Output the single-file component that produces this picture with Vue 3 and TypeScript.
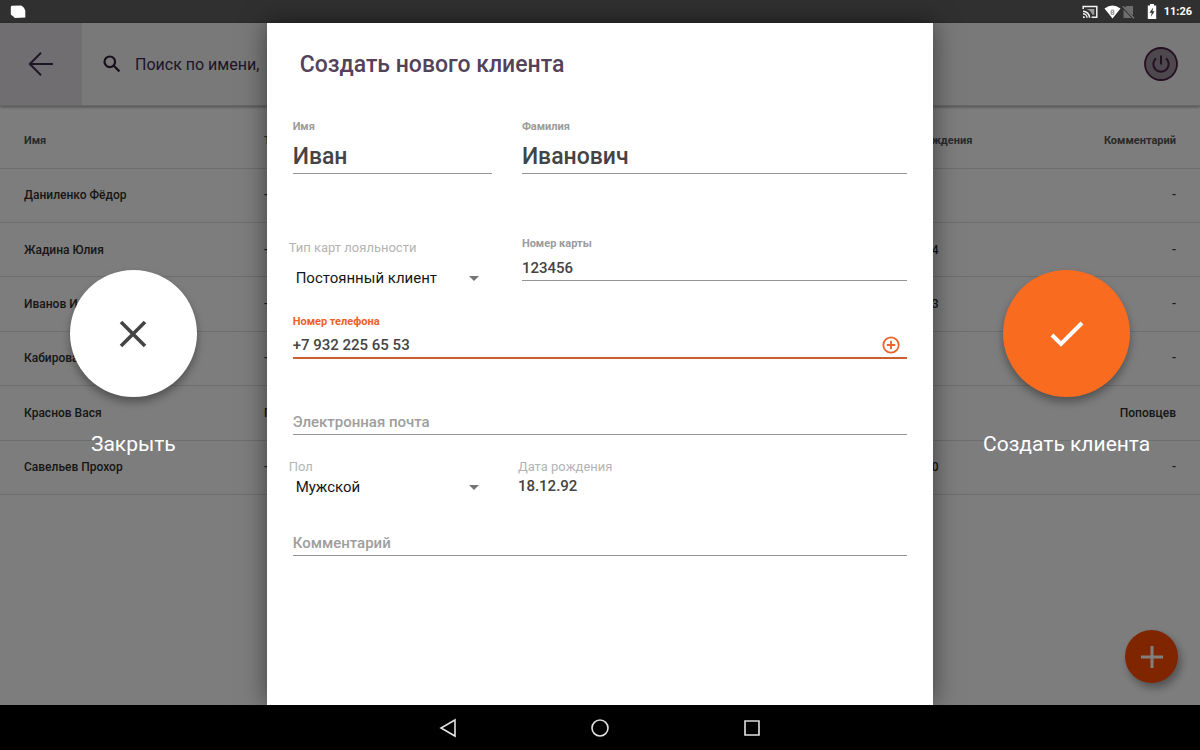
<script setup lang="ts">
import { reactive, ref } from 'vue'

interface Client {
  name: string
  card: string
  birth: string
  comment: string
}

const clients: Client[] = [
  { name: 'Даниленко Фёдор', card: '-', birth: '-', comment: '-' },
  { name: 'Жадина Юлия', card: '-', birth: '12.03.84', comment: '-' },
  { name: 'Иванов Илья', card: '-', birth: '05.07.93', comment: '-' },
  { name: 'Кабирова Анна', card: '-', birth: '-', comment: '-' },
  { name: 'Краснов Вася', card: 'Постоянный', birth: '-', comment: 'Поповцев' },
  { name: 'Савельев Прохор', card: '-', birth: '21.10.90', comment: '-' },
]

const search = ref('')
const form = reactive({
  firstName: 'Иван',
  lastName: 'Иванович',
  cardType: 'Постоянный клиент',
  cardNumber: '123456',
  phone: '+7 932 225 65 53',
  email: '',
  gender: 'Мужской',
  birthday: '18.12.92',
  comment: '',
})
</script>

<template>
  <div class="device">
    <div class="status">
      <svg class="note" width="16" height="14" viewBox="0 0 16 14"><path d="M1.5 .8 11 .4Q14.6 2 15.3 6v6.4L5 13 .8 9.4V2Z" fill="#fff" /></svg>
      <div class="tray">
        <svg width="16" height="14" viewBox="0 0 16 14" fill="none" stroke="#f2f2f2" stroke-width="1.5">
          <path d="M1.2 4V1.5h13.6v10.8H9.6" />
          <path d="M1 6.2a6.6 6.6 0 0 1 6.6 6.6M1 8.8a4 4 0 0 1 4 4" />
          <path d="M4 4h8.3v5.8h-2A9 9 0 0 0 4 4Z" fill="#9a9a9a" stroke="none" />
          <path d="M1 11v2h2a2 2 0 0 0-2-2Z" fill="#f2f2f2" stroke="none" />
        </svg>
        <div class="signal">
          <svg width="17" height="14" viewBox="0 0 17 14">
            <path d="M.5 3.6Q8.5-2.6 16.5 3.6L8.5 13.6Z" fill="#fff" />
            <path d="M7.200 5.200h2.600v4.200H7.200ZM7.200 7.300h2.600" fill="none" stroke="#8a8a8a" stroke-width="1" />
          </svg>
          <svg width="13" height="14" viewBox="0 0 13 14">
            <path d="M4 1h7v9.500L3 3ZM1.500 4.500 9.500 13h-8Z" fill="#6d6d6d" />
            <path d="m.8 1.200 11.200 12" stroke="#777" stroke-width="1.300" />
          </svg>
        </div>
        <svg width="10" height="15" viewBox="0 0 10 15">
          <path d="M3 0h4v1.500h2.200V15H.8V1.500H3Z" fill="#fff" />
          <path d="M6.200 3.500 2.500 8.800h2.200l-.8 4 3.700-5.500H5.400Z" fill="#333" />
        </svg>
        <time>11:26</time>
      </div>
    </div>

    <div class="stage">
      <main class="screen">
        <header class="bar">
          <button class="back" type="button" aria-label="Назад">
            <svg width="26" height="24" viewBox="0 0 26 24" fill="none" stroke="#3c2c4c" stroke-width="2"><path d="M25 12H2M13 .8 1.800 12 13 23.200" /></svg>
          </button>
          <svg class="lens" width="18" height="18" viewBox="0 0 18 18" fill="none" stroke="#2c2038" stroke-width="2.200"><circle cx="6.800" cy="6.800" r="5.300" /><path d="m10.800 10.800 5.600 5.600" /></svg>
          <input v-model="search" class="search" type="text" placeholder="Поиск по имени," aria-label="Поиск" />
          <button class="power" type="button" aria-label="Выход">
            <svg width="34" height="34" viewBox="0 0 34 34" fill="none" stroke="#4a1e44">
              <circle cx="17" cy="17" r="16" fill="#9a8f9c" stroke-width="1.800" />
              <path d="M12 11.200a7.700 7.700 0 1 0 10 0M17 8.500v9" stroke-width="2" />
            </svg>
          </button>
        </header>
        <table class="clients">
          <colgroup><col class="c-name" /><col class="c-card" /><col class="c-birth" /><col /></colgroup>
          <thead>
            <tr><th>Имя</th><th>Тип карты</th><th>Дата рождения</th><th>Комментарий</th></tr>
          </thead>
          <tbody>
            <tr v-for="c in clients" :key="c.name">
              <td>{{ c.name }}</td><td>{{ c.card }}</td><td>{{ c.birth }}</td><td>{{ c.comment }}</td>
            </tr>
          </tbody>
        </table>
        <button class="fab" type="button" aria-label="Добавить">
          <svg width="24" height="24" viewBox="0 0 24 24" stroke="#fff" stroke-width="3"><path d="M12 1v22M1 12h22" /></svg>
        </button>
      </main>

      <div class="overlay">
        <div class="side">
          <button id="close" class="round" type="button" aria-labelledby="close-label">
            <svg width="28" height="28" viewBox="0 0 28 28" stroke="#444" stroke-width="3.600"><path d="m2 2 24 24M26 2 2 26" /></svg>
          </button>
          <label id="close-label" for="close">Закрыть</label>
        </div>

        <form class="dialog" @submit.prevent>
          <h1>Создать нового клиента</h1>

          <div class="row names">
            <div class="field big"><label for="first">Имя</label><input id="first" v-model="form.firstName" type="text" /></div>
            <div class="field big"><label for="last">Фамилия</label><input id="last" v-model="form.lastName" type="text" /></div>
          </div>

          <div class="row card">
            <div class="picker loyal">
              <label for="type">Тип карт лояльности</label>
              <div class="select">
                <select id="type" v-model="form.cardType"><option>Постоянный клиент</option></select>
                <svg width="10" height="5" viewBox="0 0 10 5"><path d="M0 0h10L5 5Z" fill="#757575" /></svg>
              </div>
            </div>
            <div class="field"><label for="number">Номер карты</label><input id="number" v-model="form.cardNumber" type="text" /></div>
          </div>

          <div class="field phone">
            <label for="phone">Номер телефона</label>
            <div class="line">
              <input id="phone" v-model="form.phone" type="tel" />
              <button type="button" aria-label="Добавить номер">
                <svg width="18" height="18" viewBox="0 0 18 18" fill="none" stroke="#ee6128" stroke-width="1.800"><circle cx="9" cy="9" r="7.700" /><path d="M9 4.800v8.400M4.800 9h8.400" /></svg>
              </button>
            </div>
          </div>

          <div class="field email"><input v-model="form.email" type="email" placeholder="Электронная почта" aria-label="Электронная почта" /></div>

          <div class="row personal">
            <div class="picker">
              <label for="gender">Пол</label>
              <div class="select">
                <select id="gender" v-model="form.gender"><option>Мужской</option><option>Женский</option></select>
                <svg width="10" height="5" viewBox="0 0 10 5"><path d="M0 0h10L5 5Z" fill="#757575" /></svg>
              </div>
            </div>
            <div class="picker">
              <label for="birthday">Дата рождения</label>
              <input id="birthday" v-model="form.birthday" type="text" />
            </div>
          </div>

          <div class="field comment"><input v-model="form.comment" type="text" placeholder="Комментарий" aria-label="Комментарий" /></div>
        </form>

        <div class="side">
          <button id="create" class="round accept" type="button" aria-labelledby="create-label">
            <svg width="34" height="26" viewBox="0 0 34 26" fill="none" stroke="#fff" stroke-width="4"><path d="M2 14 11 23 32 2" /></svg>
          </button>
          <label id="create-label" for="create">Создать клиента</label>
        </div>
      </div>
    </div>

    <nav class="nav">
      <button type="button" aria-label="Назад"><svg width="20" height="20" viewBox="0 0 20 20"><path d="M17 2v16L3 10Z" /></svg></button>
      <button type="button" aria-label="Домой"><svg width="20" height="20" viewBox="0 0 20 20"><circle cx="10" cy="10" r="8" /></svg></button>
      <button type="button" aria-label="Обзор"><svg width="20" height="20" viewBox="0 0 20 20"><path d="M3 3h14v14H3Z" /></svg></button>
    </nav>
  </div>
</template>

<style>
body {
  margin: 0;
}
</style>

<style scoped>
.device {
  display: flex;
  flex-direction: column;
  min-height: 100vh;
  font-family: Roboto, "Noto Sans", sans-serif;
  color: #444;
}
.device *,
.device {
  box-sizing: border-box;
}
svg {
  display: block;
  flex: none;
}
button,
input,
select {
  margin: 0;
  padding: 0;
  border: 0;
  border-radius: 0;
  background: none;
  font: inherit;
  color: inherit;
  outline: none;
}
button {
  display: flex;
  align-items: center;
  justify-content: center;
  cursor: pointer;
}
input {
  min-width: 0;
  width: 100%;
}
.status {
  display: flex;
  align-items: center;
  justify-content: space-between;
  height: 23px;
  padding: 0 8px 0 10px;
  background: #303030;
}
.tray {
  display: flex;
  align-items: center;
  color: #fff;
  font-size: 11px;
  font-weight: 700;
}
.signal {
  display: flex;
  gap: 1px;
  margin: 0 12px 0 6px;
}
.tray time {
  margin-left: 7px;
}
.stage {
  flex: 1;
  display: grid;
}
.screen,
.overlay {
  grid-area: 1 / 1;
}
.screen {
  position: relative;
  background: #fbfbfb;
}
.bar {
  display: flex;
  align-items: center;
  height: 83px;
  background: #f3f3f5;
  border-bottom: 1px solid #d0ced4;
  box-shadow: 0 1px 3px rgba(0, 0, 0, 0.4);
}
.back {
  width: 82px;
  height: 100%;
  background: #e2dde4;
}
.lens {
  margin: 0 14px 0 21px;
}
.search {
  flex: 1;
  font-size: 16px;
  color: #3c2c4c;
}
.search::placeholder {
  color: #3c2c4c;
  opacity: 1;
}
.power {
  margin-right: 22px;
}
.clients {
  width: 100%;
  height: 389px;
  table-layout: fixed;
  border-collapse: collapse;
  font-size: 12px;
  font-weight: 500;
  color: #2e2e2e;
}
.c-name {
  width: 22%;
}
.c-card {
  width: 52%;
}
.c-birth {
  width: 12%;
}
.clients th,
.clients td {
  height: 54px;
  padding: 0;
  text-align: left;
  border-bottom: 1px solid #dcdcdc;
}
.clients th {
  height: 62px;
  padding-top: 8px;
  font-size: 11px;
  font-weight: 700;
  color: #555;
}
.clients th:first-child,
.clients td:first-child {
  padding-left: 24px;
}
.clients th:nth-child(3),
.clients td:nth-child(3) {
  padding-left: 3px;
}
.clients th:last-child,
.clients td:last-child {
  padding-right: 24px;
  text-align: right;
}
.fab {
  position: absolute;
  right: 22px;
  bottom: 22px;
  width: 53px;
  height: 53px;
  border-radius: 50%;
  background: #ff4c00;
  box-shadow: 3px 5px 9px rgba(0, 0, 0, 0.35);
}
.overlay {
  position: relative;
  display: grid;
  grid-template-columns: 2fr 5fr 2fr;
  background: rgba(0, 0, 0, 0.5);
}
.side {
  display: flex;
  flex-direction: column;
  align-items: center;
  justify-content: center;
  gap: 33px;
  font-size: 21px;
  line-height: 28px;
  color: #fff;
}
.round {
  width: 127px;
  height: 127px;
  border-radius: 50%;
  background: #fff;
  box-shadow: 0 5px 9px rgba(0, 0, 0, 0.35);
}
.accept {
  background: #f96c1f;
}
.dialog {
  padding: 28px 22px;
  background: #fff;
  box-shadow: 0 0 24px rgba(0, 0, 0, 0.5);
}
h1 {
  margin: 0 11px;
  font-size: 23px;
  font-weight: 500;
  line-height: 28px;
  color: #52435a;
}
.row {
  display: grid;
  grid-template-columns: 207fr 393fr;
  gap: 22px;
}
.field {
  padding: 0 4px;
  font-size: 15px;
  font-weight: 500;
}
.field label {
  display: block;
  margin-bottom: 4px;
  font-size: 11px;
  font-weight: 700;
  line-height: 14px;
  color: #9b9b9b;
}
.field input {
  display: block;
  height: 26px;
  border-bottom: 1px solid #949494;
}
.field input::placeholder {
  color: #9e9e9e;
  opacity: 1;
}
.big label {
  margin-bottom: 6px;
}
.big input {
  height: 34px;
  font-size: 23px;
}
.names {
  margin-top: 41px;
}
.card {
  margin-top: 63px;
}
.picker {
  font-size: 15px;
}
.picker label {
  display: block;
  font-size: 13px;
  line-height: 16px;
  color: #b4b4b4;
}
.picker input {
  height: 22px;
  font-weight: 500;
}
.select {
  display: flex;
  align-items: center;
  width: 190px;
  height: 24px;
  padding-left: 7px;
  color: #161616;
}
.select select {
  flex: 1;
  min-width: 0;
  height: 24px;
  appearance: none;
}
.loyal {
  display: grid;
  gap: 10px;
  margin-top: 3px;
}
.phone {
  margin-top: 25px;
}
.phone label {
  color: #ee6128;
}
.line {
  display: flex;
  align-items: center;
  height: 26px;
  padding-right: 7px;
  border-bottom: 2px solid #c8602f;
}
.line input {
  border: 0;
}
.email {
  margin-top: 50px;
}
.personal {
  margin-top: 24px;
}
.comment {
  margin-top: 31px;
}
.nav {
  display: flex;
  align-items: center;
  justify-content: center;
  gap: 132px;
  height: 45px;
  background: #000;
}
.nav svg {
  fill: none;
  stroke: #e6e6e6;
  stroke-width: 1.6;
}
</style>
